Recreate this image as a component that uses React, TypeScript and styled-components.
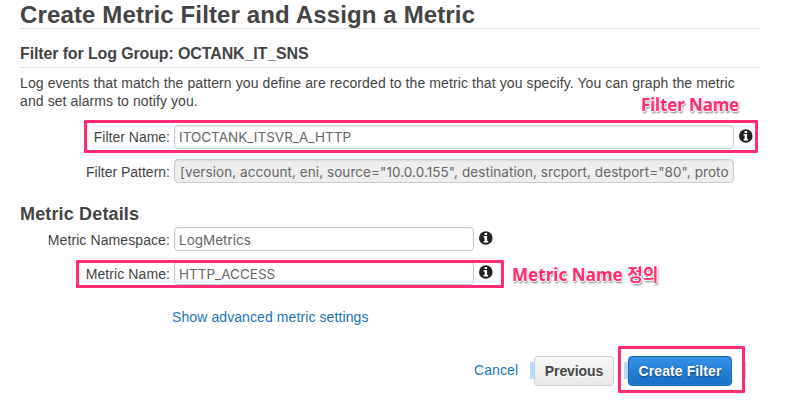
import React from "react";
import styled, { createGlobalStyle } from "styled-components";

const GlobalStyle = createGlobalStyle`
  *, *::before, *::after { box-sizing: border-box; }
  body {
    margin: 0;
    background: #fff;
    color: #444;
    font-family: "Liberation Sans", Arial, sans-serif;
    font-size: 14px;
    letter-spacing: 0.095px;
  }
`;

const Page = styled.main`
  width: 791px;
  height: 411px;
  padding-left: 20px;
  overflow: hidden;
`;

const Title = styled.h1`
  width: 740px;
  height: 29px;
  margin: 0;
  border-bottom: 1px solid #e2e2e2;
  font-size: 24px;
  line-height: 30px;
  letter-spacing: 0.13px;
  white-space: nowrap;
`;

const GroupHeading = styled.h2`
  width: 740px;
  height: 39px;
  margin: 0;
  padding-top: 15px;
  border-bottom: 1px solid #e2e2e2;
  font-size: 16px;
  line-height: 20px;
  letter-spacing: -0.13px;
  white-space: nowrap;
`;

const Intro = styled.p`
  height: 50px;
  margin: 0;
  padding-top: 6px;
  line-height: 18px;
  white-space: nowrap;
`;

const FilterGroup = styled.section`
  height: 86px;
  padding-top: 7px;
`;

const SectionHeading = styled.h2`
  height: 23px;
  margin: 0;
  font-size: 18px;
  line-height: 20px;
  letter-spacing: 0.15px;
`;

const Row = styled.div<{ $gap: number }>`
  position: relative;
  display: flex;
  align-items: center;
  height: 24px;
  margin-bottom: ${(p) => p.$gap}px;
`;

const Label = styled.label<{ $drop?: boolean; $spacing?: number }>`
  width: 150px;
  margin-right: 4px;
  padding-top: ${(p) => (p.$drop ? 2 : 0)}px;
  letter-spacing: ${(p) => p.$spacing ?? 0.095}px;
  text-align: right;
  white-space: nowrap;
`;

const Field = styled.input<{ $width: number; $drop?: boolean; $spacing?: number }>`
  width: ${(p) => p.$width}px;
  height: 24px;
  margin: 0 5px 0 0;
  padding: ${(p) => (p.$drop ? 2 : 0)}px 4px 0;
  border: 1px solid #ccc;
  border-radius: 4px;
  outline: 0;
  background: #fff;
  box-shadow: inset 0 1px 2px rgba(0, 0, 0, 0.08);
  color: #666;
  font: 13.5px Inter, sans-serif;
  letter-spacing: ${(p) => p.$spacing ?? 0}px;
  &:read-only {
    padding-left: 5px;
    background: #eee;
  }
`;

const Highlight = styled.span<{ $x: number; $y: number; $w: number; $h: number }>`
  position: absolute;
  left: ${(p) => p.$x}px;
  top: ${(p) => p.$y}px;
  width: ${(p) => p.$w}px;
  height: ${(p) => p.$h}px;
  border: 3px solid #ff2d6f;
  border-radius: 1px;
  pointer-events: none;
`;

const Note = styled.span<{ $x: number; $y: number; $spacing: number }>`
  position: absolute;
  left: ${(p) => p.$x}px;
  top: ${(p) => p.$y}px;
  color: #ff2d6f;
  font: 700 17px/22px "Noto Sans", "Noto Sans CJK KR", sans-serif;
  letter-spacing: ${(p) => p.$spacing}px;
  white-space: nowrap;
  text-shadow: 1px 0 #fff, -1px 0 #fff, 0 1px #fff, 0 -1px #fff, 1px 2px 2px rgba(0, 0, 0, 0.55);
`;

const Link = styled.a`
  color: #1a73bb;
  text-decoration: none;
  white-space: nowrap;
`;

const Advanced = styled.div`
  padding-left: 152px;
  height: 48px;
  line-height: 18px;
`;

const Actions = styled.div`
  display: flex;
  align-items: center;
  height: 30px;
`;

const CancelSlot = styled.div`
  width: 510px;
  padding: 0 12px 2px 454px;
`;

const Selection = styled.span<{ $width: number; $left: number }>`
  width: ${(p) => p.$width}px;
  height: 17px;
  margin: -2px 0 0 ${(p) => p.$left}px;
  background: #b9dbff;
`;

const Button = styled.button<{ $primary?: boolean }>`
  width: ${(p) => (p.$primary ? 104 : 80)}px;
  height: 30px;
  padding: 0;
  border: 1px solid ${(p) => (p.$primary ? "#1865b4" : "#ccc")};
  border-radius: 4px;
  background: ${(p) => (p.$primary ? "linear-gradient(#3590e8, #156fc6)" : "linear-gradient(#f8f8f8, #e9e9e9)")};
  box-shadow: ${(p) => (p.$primary ? "inset 0 0 0 1px rgba(70, 155, 235, 0.35)" : "none")};
  color: ${(p) => (p.$primary ? "#fff" : "#444")};
  font: 700 14px "Liberation Sans", Arial, sans-serif;
  letter-spacing: ${(p) => (p.$primary ? 0.1 : -0.1)}px;
  text-shadow: ${(p) => (p.$primary ? "0 1px 2px rgba(0, 0, 0, 0.5)" : "0 1px #fff")};
  white-space: nowrap;
`;

const Primary = styled.span`
  position: relative;
  display: flex;
`;

const Icon = styled.svg`
  flex: none;
  margin-bottom: 2px;
`;

const InfoIcon = () => (
  <Icon width="14" height="14" viewBox="0 0 14 14" aria-label="Info">
    <circle cx="6.8" cy="7" r="6.8" fill="#222" />
    <path d="M5.6 1.9h2.5v2.1H5.6zM4.6 5.1h3.5v4.8h1v1.5H4.6V9.9h1V6.6h-1z" fill="#fff" />
  </Icon>
);

function FilterFields() {
  return (
    <FilterGroup>
      <Row $gap={10}>
        <Label $spacing={0}>Filter Name:</Label>
        <Field $width={560} defaultValue="ITOCTANK_ITSVR_A_HTTP" />
        <InfoIcon />
        <Highlight $x={64} $y={-5} $w={674} $h={33} />
        <Note $x={621} $y={-31} $spacing={-0.15}>Filter Name</Note>
      </Row>
      <Row $gap={0}>
        <Label $drop $spacing={0}>Filter Pattern:</Label>
        <Field
          $width={560}
          $drop
          $spacing={0.07}
          readOnly
          defaultValue={'[version, account, eni, source="10.0.0.155", destination, srcport, destport="80", protocol="6"]'}
        />
      </Row>
    </FilterGroup>
  );
}

function MetricFields() {
  return (
    <>
      <Row $gap={10}>
        <Label $drop>Metric Namespace:</Label>
        <Field $width={300} $drop defaultValue="LogMetrics" />
        <InfoIcon />
      </Row>
      <Row $gap={23}>
        <Label $drop>Metric Name:</Label>
        <Field $width={300} $drop defaultValue="HTTP_ACCESS" />
        <InfoIcon />
        <Highlight $x={56} $y={-1} $w={428} $h={28} />
        <Note $x={492} $y={3} $spacing={0.05}>Metric Name 정의</Note>
      </Row>
    </>
  );
}

export default function App() {
  return (
    <>
      <GlobalStyle />
      <Page>
        <Title>Create Metric Filter and Assign a Metric</Title>
        <GroupHeading>Filter for Log Group: OCTANK_IT_SNS</GroupHeading>
        <Intro>
          Log events that match the pattern you define are recorded to the metric that you specify. You can graph the metric
          <br />
          and set alarms to notify you.
        </Intro>
        <FilterFields />
        <SectionHeading>Metric Details</SectionHeading>
        <MetricFields />
        <Advanced>
          <Link>Show advanced metric settings</Link>
        </Advanced>
        <Actions>
          <CancelSlot>
            <Link>Cancel</Link>
          </CancelSlot>
          <Selection $width={4} $left={0} />
          <Button>Previous</Button>
          <Selection $width={4} $left={10} />
          <Primary>
            <Button $primary>Create Filter</Button>
            <Highlight $x={-10} $y={-10} $w={127} $h={47} />
          </Primary>
          <Selection $width={1} $left={13} />
        </Actions>
      </Page>
    </>
  );
}
